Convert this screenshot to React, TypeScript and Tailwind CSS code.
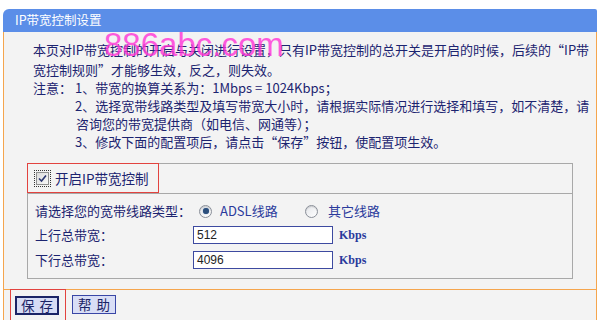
import React from "react";

const FONT = "font-['Noto_Sans_CJK_SC','Noto_Sans',sans-serif]";

function Radio({ checked }: { checked?: boolean }) {
  return (
    <span className="w-[13px] h-[13px] rounded-full border border-[#8a8f99] bg-gradient-to-br from-[#e4e6ea] to-[#ffffff] flex items-center justify-center shadow-[inset_0_1px_1px_rgba(0,0,0,0.15)]">
      {checked && (
        <span className="w-[6px] h-[6px] rounded-full bg-[#2c4f7c] shadow-[0_0_1px_#4a74a8]" />
      )}
    </span>
  );
}

function Checkbox() {
  return (
    <span className="w-[17px] h-[17px] border border-dotted border-[#333] flex items-center justify-center">
      <span className="w-[13px] h-[13px] border border-[#8e8f8f] bg-gradient-to-br from-[#dcdcdc] to-[#f8f8f8] flex items-center justify-center">
        <svg width="9" height="9" viewBox="0 0 9 9">
          <path d="M1 4.5 L3.5 7 L8 1.5" fill="none" stroke="#2a3670" strokeWidth="1.6" />
        </svg>
      </span>
    </span>
  );
}

export default function App() {
  return (
    <div className={`w-[600px] h-[320px] bg-white pt-[9px] px-[3px] overflow-hidden relative ${FONT}`}>
      <div className="h-[23px] bg-[#5b8ee8] rounded-tl-[6px] rounded-tr-[2px] text-white text-[12.5px] pl-[12px] flex items-center">
        IP带宽控制设置
      </div>

      <div className="border-x border-b border-[#f5a54d] bg-[#f3f3f3] text-[#1c2470]">
        <p className="pl-[29px] pr-[6px] pt-[8px] text-[13px] leading-[20px] whitespace-nowrap">
          本页对IP带宽控制的开启与关闭进行设置，只有IP带宽控制的总开关是开启的时候，后续的“IP带
          <br />
          宽控制规则”才能够生效，反之，则失效。
        </p>

        <div className="flex pl-[29px] text-[13px] leading-[18px] -mt-px">
          <span className="w-[42px]">注意：</span>
          <div>
            <p>1、带宽的换算关系为：1Mbps = 1024Kbps；</p>
            <p>2、选择宽带线路类型及填写带宽大小时，请根据实际情况进行选择和填写，如不清楚，请</p>
            <p className="pl-[1px]">咨询您的带宽提供商（如电信、网通等）；</p>
            <p>3、修改下面的配置项后，请点击“保存”按钮，使配置项生效。</p>
          </div>
        </div>

        <div className="ml-[23px] mt-[12px] mb-[10px] w-[546px] border border-[#a8a8a8]">
          <div className="h-[31px] border-b border-[#a8a8a8]">
            <div className="-ml-px -mt-px w-[132px] h-[30px] border border-[#e2433f] flex items-center pl-[6px] gap-[4px]">
              <Checkbox />
              <span className="text-[13.5px]">开启IP带宽控制</span>
            </div>
          </div>

          <div className="pt-[6px] pb-[6px] text-[13px]">
            <div className="h-[22px] flex items-center pl-[7px]">
              <span className="w-[164px]">请选择您的宽带线路类型：</span>
              <Radio checked />
              <span className="ml-[8px] w-[85px] text-[#2a3a9c]">ADSL线路</span>
              <Radio />
              <span className="ml-[10px] text-[#2a3a9c]">其它线路</span>
            </div>
            <div className="h-[25px] flex items-center pl-[7px]">
              <span className="w-[158px]">上行总带宽：</span>
              <div className="w-[140px] h-[18px] border border-[#3d4aa0] bg-white text-[12px] leading-[16px] pl-[3px] text-[#222] font-['Liberation_Sans',sans-serif]">
                512
              </div>
              <span className="ml-[6px] text-[12px] text-[#2a3a9c] font-['Liberation_Serif',serif] font-bold">Kbps</span>
            </div>
            <div className="h-[25px] flex items-center pl-[7px]">
              <span className="w-[158px]">下行总带宽：</span>
              <div className="w-[140px] h-[18px] border border-[#3d4aa0] bg-white text-[12px] leading-[16px] pl-[3px] text-[#222] font-['Liberation_Sans',sans-serif]">
                4096
              </div>
              <span className="ml-[6px] text-[12px] text-[#2a3a9c] font-['Liberation_Serif',serif] font-bold">Kbps</span>
            </div>
          </div>
        </div>
      </div>

      <div className="h-[40px] border-x border-[#f5a54d] bg-[#f3f3f3] flex items-start">
        <div className="ml-[6px] -mt-px w-[56px] h-[32px] border border-[#e2433f] pl-[4px] pt-[6px]">
          <div className="w-[44px] h-[19px] bg-[#d6dcf5] border-2 border-[#1b2466] text-[#1b2466] text-[13.5px] leading-none flex items-center justify-center gap-[5px]">
            <span>保</span>
            <span>存</span>
          </div>
        </div>
        <div className="ml-[6px] mt-[5px] w-[44px] h-[19px] bg-[#d9def6] border border-[#3946a6] text-[#1b2466] text-[13.5px] leading-none flex items-center justify-center gap-[5px]">
          <span>帮</span>
          <span>助</span>
        </div>
      </div>

      <div className="absolute left-[104px] top-[27px] text-[33px] leading-[36px] text-[#ff33d6]/80 font-['Liberation_Sans',sans-serif] pointer-events-none">
        886abc.com
      </div>
    </div>
  );
}
